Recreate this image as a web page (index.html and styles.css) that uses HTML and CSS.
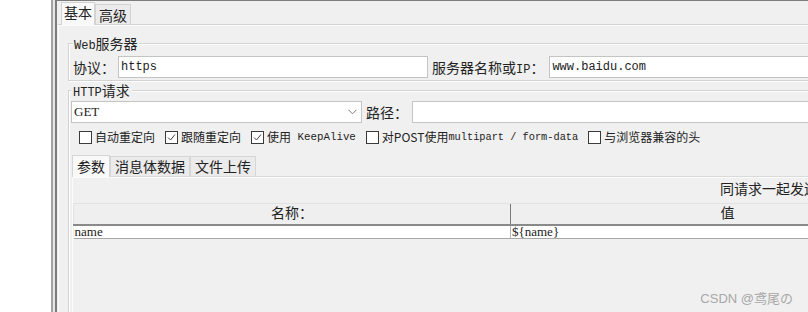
FILE: index.html
```html
<!DOCTYPE html>
<html lang="zh-CN">
<head>
    <meta charset="UTF-8">
    <title>HTTP请求</title>
    <link rel="stylesheet" href="styles.css">
</head>
<body>
    <div class="app">
        <div class="blank"></div>
        <div class="sash"></div>
        <div class="side">
            <div class="grip">
                <svg width="12" height="3" viewBox="0 0 12 3"><path d="M1 2.5 L3 0.3 L5 2.5 Z M6.5 0 L10.5 0 L8.5 2.2 Z" fill="#222"/></svg>
            </div>
            <div class="main">
                <div class="tabs">
                    <span class="tab on">基本</span><span class="tab">高级</span>
                </div>
                <div class="panel">
                    <fieldset class="group web">
                        <legend><span class="lat">Web</span>服务器</legend>
                        <div class="row">
                            <label class="lbl" for="protocol">协议：</label>
                            <input id="protocol" class="field proto" type="text" value="https">
                            <label class="lbl host-lbl" for="host">服务器名称或<span class="lat">IP</span>：</label>
                            <input id="host" class="field host" type="text" value="www.baidu.com">
                        </div>
                    </fieldset>
                    <fieldset class="group http">
                        <legend><span class="lat">HTTP</span>请求</legend>
                        <div class="row">
                            <div class="select">
                                <span>GET</span>
                                <svg width="9" height="6" viewBox="0 0 9 6"><polyline points="0.5,0.8 4.5,4.8 8.5,0.8" fill="none" stroke="#777" stroke-width="1"/></svg>
                            </div>
                            <label class="lbl path-lbl" for="path">路径：</label>
                            <input id="path" class="field path" type="text" value="">
                        </div>
                        <div class="checks">
                            <label class="check"><span class="box"></span>自动重定向</label>
                            <label class="check"><span class="box"><svg width="11" height="11" viewBox="0 0 11 11"><polyline points="2,5.5 4.5,8 9,2.5" fill="none" stroke="#444" stroke-width="1"/></svg></span>跟随重定向</label>
                            <label class="check"><span class="box"><svg width="11" height="11" viewBox="0 0 11 11"><polyline points="2,5.5 4.5,8 9,2.5" fill="none" stroke="#444" stroke-width="1"/></svg></span>使用<span class="mono"> KeepAlive</span></label>
                            <label class="check"><span class="box"></span>对POST使用<span class="mono narrow">multipart / form-data</span></label>
                            <label class="check"><span class="box"></span>与浏览器兼容的头</label>
                        </div>
                        <div class="subtabs">
                            <span class="subtab on">参数</span><span class="subtab">消息体数据</span><span class="subtab">文件上传</span>
                        </div>
                        <div class="subpanel">
                            <div class="caption">同请求一起发送参数：</div>
                            <table class="args">
                                <thead>
                                    <tr><th class="col-name">名称：</th><th class="col-value">值</th></tr>
                                </thead>
                                <tbody>
                                    <tr><td class="col-name">name</td><td class="col-value">${name}</td></tr>
                                </tbody>
                            </table>
                        </div>
                    </fieldset>
                </div>
            </div>
        </div>
    </div>
    <div class="watermark">CSDN @鸢尾の</div>
</body>
</html>
```

FILE: styles.css
```css
* {
  box-sizing: border-box;
}
html, body {
  margin: 0;
  height: 100%;
}
body {
  position: relative;
  overflow: hidden;
  background: #fff;
  color: #222;
  font-family: "Noto Sans CJK SC", sans-serif;
  font-size: 14px;
  line-height: 16px;
}
.app {
  display: flex;
  width: 1000px;
  height: 312px;
}
.blank {
  flex: none;
  width: 51px;
  background: #fff;
}
.sash {
  flex: none;
  width: 4px;
  background: linear-gradient(to right, #a3a3a3 0 2px, #e6e6e6 2px 4px);
}
.side {
  flex: 1;
  display: flex;
  flex-direction: column;
  border-left: 2px solid #7c7c7c;
  background: #f0f0f0;
}
.grip {
  height: 3px;
  overflow: hidden;
  padding-left: 1px;
}
.grip svg {
  display: block;
}
.main {
  flex: 1;
  border-top: 1px solid #7c7c7c;
  background: #f0f0f0;
}
.lat {
  font-family: "Liberation Mono", monospace;
  font-size: 12px;
  line-height: 1;
}
.mono {
  font-family: "Liberation Mono", monospace;
  font-size: 10.8px;
  line-height: 1;
  white-space: pre;
}
.mono.narrow {
  font-size: 10.3px;
}

/* top tabs */
.tabs {
  display: flex;
  align-items: flex-start;
  height: 23px;
  margin: 1px 0 -1px 4px;
  position: relative;
  z-index: 1;
}
.tab {
  height: 20px;
  margin-top: 2px;
  padding: 0 3px;
  border: 1px solid #d3d3d3;
  border-bottom: none;
  background: #ebebeb;
  line-height: 20px;
}
.tab.on {
  height: 23px;
  margin-top: 0;
  padding: 0 2px;
  background: #f9f9f9;
  line-height: 19px;
}
.panel {
  margin-left: 1px;
  padding-top: 1px;
  border-top: 1px solid #d3d3d3;
  box-shadow: inset 1px 1px 0 #fbfbfb;
  height: 300px;
}

/* groups */
.group {
  margin: 0 0 0 10px;
  min-width: 0;
  border: 1px solid #d3d3d3;
  box-shadow: inset 1px 1px 0 #fff, 1px 1px 0 #fff;
}
.group legend {
  height: 16px;
  padding: 0 1px;
  background: #f0f0f0;
  line-height: 16px;
}
.web {
  margin-top: 9px;
  padding: 5px 0 2px 4px;
}
.http {
  margin-top: 1px;
  padding: 3px 0 0 2px;
  height: 240px;
}
.http legend {
  padding: 0 2px;
}
.row {
  display: flex;
  align-items: center;
  height: 22px;
}
.lbl {
  flex: none;
  line-height: 16px;
}
.field {
  height: 22px;
  margin: 0;
  padding: 0 2px;
  border: 1px solid #c4c4c4;
  background: #fff;
  color: #222;
  font-family: "Liberation Mono", monospace;
  font-size: 12px;
  outline: none;
}
.proto {
  width: 310px;
  margin: 0 4px 0 3px;
}
.host {
  width: 300px;
  margin-left: 5px;
}
.select {
  display: flex;
  align-items: center;
  justify-content: space-between;
  width: 291px;
  height: 22px;
  padding: 0 4px 0 2px;
  border: 1px solid #c4c4c4;
  background: #fff;
  font-family: "Liberation Serif", serif;
  font-size: 13px;
}
.path-lbl {
  margin-left: 4px;
}
.path {
  width: 420px;
  margin-left: 4px;
}

/* check boxes */
.checks {
  display: flex;
  align-items: center;
  height: 16px;
  margin: 6px 0 0 8px;
  font-size: 12px;
}
.check {
  display: flex;
  align-items: center;
  margin-right: 10px;
  white-space: nowrap;
}
.box {
  display: flex;
  align-items: center;
  justify-content: center;
  width: 13px;
  height: 13px;
  margin-right: 3px;
  border: 1px solid #3a3a3a;
  background: #fff;
}

/* parameter tabs */
.subtabs {
  display: flex;
  align-items: flex-start;
  height: 22px;
  margin: 10px 0 -1px 1px;
  position: relative;
  z-index: 1;
}
.subtab {
  height: 20px;
  margin-top: 1px;
  padding: 0 4px;
  border: 1px solid #d6d6d6;
  border-bottom: none;
  background: #ebebeb;
  line-height: 19px;
}
.subtab.on {
  height: 22px;
  margin-top: 0;
  background: #f9f9f9;
  line-height: 20px;
}
.subpanel {
  margin-left: 1px;
  height: 140px;
  border-top: 1px solid #dadada;
  box-shadow: inset 1px 1px 0 #fbfbfb;
}
.caption {
  margin-top: 5px;
  padding-left: 648px;
  white-space: nowrap;
  font-family: "Liberation Serif", "Noto Sans CJK SC", serif;
}

/* argument table */
.args {
  width: 871px;
  margin: 5px 0 0 1px;
  border-collapse: collapse;
  table-layout: fixed;
  font-family: "Liberation Serif", "Noto Sans CJK SC", serif;
}
.args th {
  height: 21px;
  padding: 0;
  border-top: 1px solid #e2e2e2;
  border-bottom: 2px solid #8a8a8a;
  background: #efefef;
  font-weight: normal;
  font-size: 14px;
  line-height: 16px;
  text-align: center;
}
.args th.col-name {
  width: 437px;
  border-left: 1px solid #e2e2e2;
}
.args th.col-value {
  border-left: 1px solid #7a7a7a;
}
.args td {
  height: 13px;
  padding: 0 0 0 1px;
  border-bottom: 1px solid #a8a8a8;
  background: #fff;
  font-size: 13px;
  line-height: 12px;
  vertical-align: top;
}
.args td.col-value {
  border-left: 1px solid #b5b5b5;
}

.watermark {
  position: absolute;
  right: 15px;
  bottom: 5px;
  color: #a8a8a8;
  font-family: "Liberation Sans", "Noto Sans CJK SC", sans-serif;
  font-size: 13px;
  line-height: 16px;
}
```
